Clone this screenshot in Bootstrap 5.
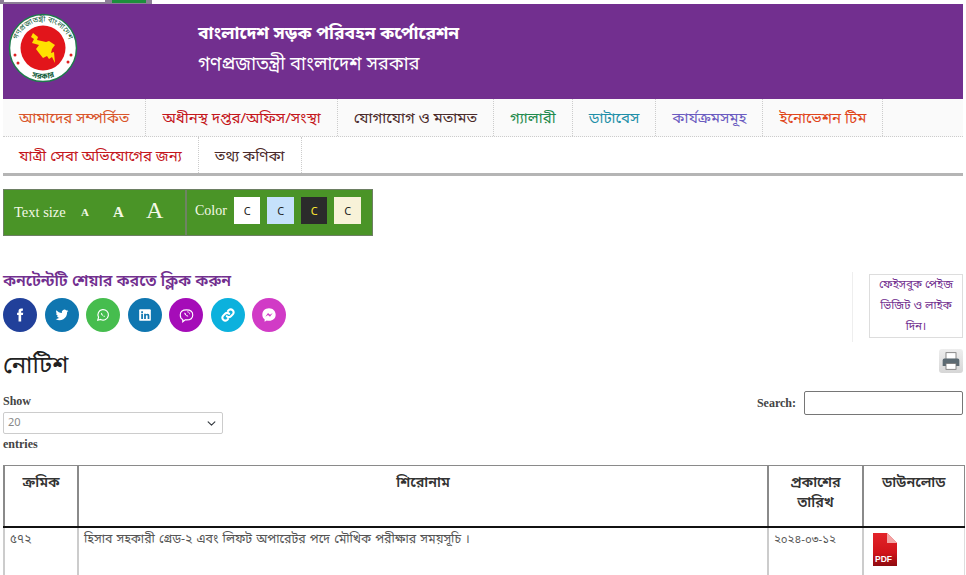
<!DOCTYPE html>
<html lang="bn">
  <head>
    <meta charset="UTF-8" />
    <meta name="viewport" content="width=device-width, initial-scale=1.0" />
    <title>নোটিশ</title>
    <link
      href="https://cdn.jsdelivr.net/npm/bootstrap@5.3.3/dist/css/bootstrap.min.css"
      rel="stylesheet"
    />
    <style>
      html { overflow: hidden; }
      body { font-family: "Noto Sans Bengali", "Liberation Serif", "Noto Sans", serif; font-size: 13px; color: #333; background: #fff; padding: 0 3px; }
      .top-strip { width: 152px; height: 4px; background: #8c7f96; gap: 7px; margin-left: -3px; padding-left: 4px; }
      .top-strip i { display: block; height: 2px; }
      .strip-input { width: 101px; background: #fff; }
      .strip-btn { width: 34px; height: 3px !important; background: #1c8f3c; }
      .banner { height: 95px; background: #722f8f; color: #fff; }
      .banner-logo { width: 195px; padding: 9px 0 0 5px; }
      .banner-title { font-size: 17.5px; font-weight: 700; line-height: 26px; margin-top: 18px; }
      .banner-sub { font-size: 18.4px; line-height: 26px; margin-top: 5px; }
      .menu-bar { border-bottom: 3px solid #b5b5b5; background: #fff; }
      .menu-row { height: 38px; border-bottom: 1px dotted #ccc; background: #fafafa; }
      .menu-row + .menu-row { background: #fff; border-bottom: 0; height: 36px; }
      .menu-row a { display: block; padding: 2px 16px 0; line-height: 36px; font-size: 15px; text-decoration: none; border-right: 1px dotted #ccc; }
      .access-panel { width: 370px; height: 47px; margin-top: 13px; background: #4a9427; border: 1px solid #6d7f63; color: #f4f9e6; }
      .access-left { width: 183px; border-right: 2px solid #6f8364; padding-left: 10px; }
      .access-left span { font-family: "Liberation Serif", serif; line-height: 1; }
      .access-right { padding: 0 0 5px 8px; font-family: "Liberation Serif", serif; font-size: 14px; gap: 7px; }
      .swatch { width: 26.5px; height: 27px; font-family: "Noto Sans", sans-serif; font-size: 11px; line-height: 27px; text-align: center; }
      .share-block { margin-top: 33px; }
      .share-title { font-size: 16px; font-weight: 600; color: #722f8f; line-height: 24px; margin: 1px 0 4px; }
      .share-row { gap: 7.5px; }
      .share-btn { width: 34px; height: 34px; border-radius: 50%; }
      .fb-side { width: 111px; height: 70px; border-left: 1px solid #eee; padding: 2px 0 0 16px; margin-top: 3px; }
      .fb-box { width: 94px; height: 64px; border: 1px solid #ddd; padding: 0 7px; color: #722f8f; font-size: 11.5px; line-height: 21px; text-align: center; }
      .page-title { font-size: 24px; font-weight: 400; color: #222; line-height: 36px; margin: 1px 0 0; }
      .print-btn { width: 24px; height: 24px; background: linear-gradient(#eee, #d6d6d6); border-radius: 3px; margin-top: 1px; }
      .len-label { font-family: "Liberation Serif", serif; font-size: 12px; line-height: 16px; font-weight: 700; color: #444; }
      .len-select { width: 220px; height: 22px; padding: 0 8px 0 4px; font-size: 11px; color: #888; border-color: #ccc; border-radius: 2px; background-size: 11px 9px; background-position: right 5px center; }
      .search-box { width: 159px; height: 24px; border: 1px solid #767676; border-radius: 2px; }
      .notice-table { margin: 13px 0 0; table-layout: fixed; width: 960px; border-collapse: collapse; }
      .notice-table th { font-size: 14.3px; font-weight: 600; line-height: 20px; text-align: center; vertical-align: top; padding: 8px 5px 11px; height: 61px; border: 1px solid #8a8a8a; border-bottom: 2px solid #111; border-left-width: 2px; color: #333; }
      .notice-table td { font-size: 12px; color: #555; padding: 2px 5px; height: 70px; border: 0; border-left: 2px solid #ccc; border-right: 1px solid #ddd; vertical-align: top; line-height: 20px; }
      .notice-table td.notice-name { font-size: 12.4px; word-spacing: 1px; }
      .notice-table td.notice-date { font-size: 11.5px; }
      .pdf-icon { margin: 3px 0 0 4px; }
      .pdf-label { font-family: "Liberation Sans", sans-serif; font-size: 8.5px; font-weight: 700; fill: #fff; }
    </style>
  </head>
  <body>
    <div class="top-strip d-flex">
      <i class="strip-input"></i>
      <i class="strip-btn"></i>
    </div>

    <header class="banner d-flex">
      <div class="banner-logo">
        <svg width="70" height="70" viewBox="0 0 70 70">
          <defs>
            <path id="ringTop" d="M11 48 A27 27 0 1 1 59 48" />
            <path id="ringBottom" d="M8 50 A31 31 0 0 0 62 50" />
          </defs>
          <circle cx="35" cy="35" r="33.500" fill="#fff" stroke="#1f7a4d" stroke-width="1.500" />
          <circle cx="35" cy="35" r="22.500" fill="#e2151b" />
          <path d="M25 20L30 24 29 27 38 29 41 28 47 32 44 36 43 40 46 39 47 50 44 44 41 46 39 43 35 45 31 40 28 36 31 32 24 30 26 26 23 24z" fill="#ffe000" />
          <circle cx="7" cy="42" r="1.500" fill="#d22" />
          <circle cx="10" cy="50" r="1.500" fill="#d22" />
          <circle cx="63" cy="42" r="1.500" fill="#d22" />
          <circle cx="60" cy="49" r="1.500" fill="#d22" />
          <text font-size="7.500" fill="#14603c" text-anchor="middle"><textPath href="#ringTop" startOffset="50%">গণপ্রজাতন্ত্রী বাংলাদেশ</textPath></text>
          <text font-size="8" font-weight="700" fill="#14603c" text-anchor="middle"><textPath href="#ringBottom" startOffset="50%">সরকার</textPath></text>
        </svg>
      </div>
      <div>
        <div class="banner-title">বাংলাদেশ সড়ক পরিবহন কর্পোরেশন</div>
        <div class="banner-sub">গণপ্রজাতন্ত্রী বাংলাদেশ সরকার</div>
      </div>
    </header>

    <nav class="menu-bar">
      <div class="menu-row d-flex">
        <a href="#" style="color: #d9552b">আমাদের সম্পর্কিত</a>
        <a href="#" style="color: #c4161c">অধীনস্থ দপ্তর/অফিস/সংস্থা</a>
        <a href="#" style="color: #4a2a2a">যোগাযোগ ও মতামত</a>
        <a href="#" style="color: #1f8a4c">গ্যালারী</a>
        <a href="#" style="color: #1f8fa8">ডাটাবেস</a>
        <a href="#" style="color: #6a5bc0">কার্যক্রমসমূহ</a>
        <a href="#" style="color: #e0461c">ইনোভেশন টিম</a>
      </div>
      <div class="menu-row d-flex">
        <a href="#" style="color: #c4161c">যাত্রী সেবা অভিযোগের জন্য</a>
        <a href="#" style="color: #4a2a2a">তথ্য কণিকা</a>
      </div>
    </nav>

    <section class="access-panel d-flex">
      <div class="access-left d-flex align-items-center">
        <span style="font-size: 14.5px; width: 67px">Text size</span>
        <span style="font-size: 11px; font-weight: 700; width: 32px">A</span>
        <span style="font-size: 15px; font-weight: 700; width: 33px">A</span>
        <span style="font-size: 24px; padding-bottom: 6px">A</span>
      </div>
      <div class="access-right d-flex align-items-center">
        <span>Color</span>
        <div class="swatch" style="background: #fff; color: #222">C</div>
        <div class="swatch" style="background: #c5e1fb; color: #222">C</div>
        <div class="swatch" style="background: #2b2b2b; color: #ffe933">C</div>
        <div class="swatch" style="background: #f8f2d8; color: #222">C</div>
      </div>
    </section>

    <section class="share-block d-flex justify-content-between">
      <div>
        <h2 class="share-title">কনটেন্টটি শেয়ার করতে ক্লিক করুন</h2>
        <div class="share-row d-flex">
          <a class="share-btn d-flex align-items-center justify-content-center" href="#" style="background: #21409a">
            <svg width="14" height="14" viewBox="0 0 24 24" fill="#fff"><path d="M14 8V6c0-1 .5-1.500 1.500-1.500H17V1h-3c-3 0-4.500 2-4.500 4.500V8H7v4h2.500v11H14V12h3l.5-4z" /></svg>
          </a>
          <a class="share-btn d-flex align-items-center justify-content-center" href="#" style="background: #0f76b0">
            <svg width="14" height="14" viewBox="0 0 24 24" fill="#fff"><path d="M23 5c-.8.4-1.700.6-2.600.7.900-.6 1.600-1.400 2-2.500-.9.500-1.800.9-2.900 1.100A4.500 4.500 0 0 0 11.800 8.500C8 8.300 4.700 6.500 2.500 3.800c-1.200 2-.6 4.700 1.400 6-.7 0-1.400-.2-2-.6 0 2.200 1.600 4.100 3.600 4.500-.7.200-1.400.2-2 .1.600 1.800 2.200 3.100 4.200 3.100A9 9 0 0 1 1 18.800 12.800 12.800 0 0 0 20.700 7.400c.9-.6 1.700-1.400 2.300-2.400z" /></svg>
          </a>
          <a class="share-btn d-flex align-items-center justify-content-center" href="#" style="background: #46bd4e">
            <svg width="14" height="14" viewBox="0 0 24 24" fill="none" stroke="#fff" stroke-width="2"><path d="M3 21l1.400-5A9 9 0 1 1 8 19.600z" /><path d="M9 8c-1 1-.5 3 1.500 5s4 2.500 5 1.500l-1.500-1.500-1 .5c-1-.5-1.500-1-2-2l.5-1z" fill="#fff" stroke="none" /></svg>
          </a>
          <a class="share-btn d-flex align-items-center justify-content-center" href="#" style="background: #0f76b0">
            <svg width="14" height="14" viewBox="0 0 24 24"><rect x="2" y="2" width="20" height="20" rx="2" fill="#fff" /><path d="M5.500 10h3v9h-3zM5.500 5.500h3v3h-3zM10.500 10h3v1.300c.6-1 1.600-1.500 2.800-1.500 2.300 0 3.200 1.500 3.200 4V19h-3v-4.700c0-1.200-.4-2-1.500-2s-1.500.8-1.500 2V19h-3z" fill="#0f76b0" /></svg>
          </a>
          <a class="share-btn d-flex align-items-center justify-content-center" href="#" style="background: #a50cb8">
            <svg width="15" height="15" viewBox="0 0 24 24" fill="none" stroke="#fff" stroke-width="1.800"><path d="M6 18.500C3 17 2 14.500 2 11c0-5 3-8 10-8s10 3 10 8-3 8-10 8h-2l-4 3z" /><path d="M9 7c-1 .8-.5 2.500 1.500 4.500S14 14 15 13l-1.500-1.500-1 .5-1.500-1.500.5-1z" fill="#fff" stroke="none" /><path d="M13 6c2.500 0 4 1.500 4 4" stroke-width="1.200" /></svg>
          </a>
          <a class="share-btn d-flex align-items-center justify-content-center" href="#" style="background: #0cb1dd">
            <svg width="14" height="14" viewBox="0 0 24 24" fill="none" stroke="#fff" stroke-width="3.500" stroke-linecap="round"><path d="M10 14a5 5 0 0 0 7 0l3.500-3.500a5 5 0 0 0-7-7L12 5" /><path d="M14 10a5 5 0 0 0-7 0l-3.500 3.500a5 5 0 0 0 7 7L12 19" /></svg>
          </a>
          <a class="share-btn d-flex align-items-center justify-content-center" href="#" style="background: #d13bc6">
            <svg width="16" height="16" viewBox="0 0 24 24"><path d="M12 2C6 2 2 6.200 2 11.500c0 3 1.300 5.400 3.400 7V22l3.200-1.800c1 .3 2.200.4 3.400.4 6 0 10-4 10-9.100S18 2 12 2z" fill="#fff" /><path d="M6.500 14.500L10.500 9l3 2.500L17.500 9l-4 5.500-3-2.500z" fill="#d13bc6" /></svg>
          </a>
        </div>
      </div>
      <aside class="fb-side">
        <div class="fb-box">ফেইসবুক পেইজ ভিজিট ও লাইক দিন।</div>
      </aside>
    </section>

    <div class="d-flex justify-content-between" style="margin-top: 6px">
      <h1 class="page-title">নোটিশ</h1>
      <a class="print-btn d-flex align-items-center justify-content-center" href="#">
        <svg width="20" height="20" viewBox="0 0 24 24"><rect x="6" y="2" width="12" height="8" fill="#fff" stroke="#777" /><path d="M2 11a2 2 0 0 1 2-2h16a2 2 0 0 1 2 2v7H18v-2H6v2H2z" fill="#5c6a72" /><rect x="6" y="15" width="12" height="7" fill="#fff" stroke="#777" /></svg>
      </a>
    </div>

    <div class="d-flex justify-content-between" style="margin-top: 6px">
      <div style="padding-top: 2px">
        <div class="len-label" style="margin-bottom: 3px">Show</div>
        <select class="form-select len-select"><option>20</option></select>
        <div class="len-label" style="margin-top: 2px">entries</div>
      </div>
      <div class="d-flex align-items-start gap-2 len-label">
        <span style="line-height: 24px">Search:</span>
        <input class="search-box" type="text" />
      </div>
    </div>

    <table class="table notice-table">
      <colgroup>
        <col style="width: 74px" />
        <col style="width: 690px" />
        <col style="width: 95px" />
        <col style="width: 101px" />
      </colgroup>
      <thead>
        <tr>
          <th>ক্রমিক</th>
          <th>শিরোনাম</th>
          <th>প্রকাশের তারিখ</th>
          <th>ডাউনলোড</th>
        </tr>
      </thead>
      <tbody>
        <tr>
          <td>৫৭২</td>
          <td class="notice-name">হিসাব সহকারী গ্রেড-২ এবং লিফট অপারেটর পদে মৌখিক পরীক্ষার সময়সূচি ।</td>
          <td class="notice-date">২০২৪-০৩-১২</td>
          <td>
            <svg class="d-block pdf-icon" width="24" height="33" viewBox="0 0 24 33">
              <defs>
                <linearGradient id="pdfFill" x1="0" y1="0" x2="0" y2="1">
                  <stop offset="0" stop-color="#e3242a" />
                  <stop offset="0.6" stop-color="#d0141a" />
                  <stop offset="1" stop-color="#8e0b10" />
                </linearGradient>
              </defs>
              <path d="M0 0h14l10 10v23H0z" fill="url(#pdfFill)" />
              <path d="M14 0l10 10h-10z" fill="#f3a5a5" />
              <text class="pdf-label" x="2" y="29">PDF</text>
            </svg>
          </td>
        </tr>
      </tbody>
    </table>

    <script src="https://cdn.jsdelivr.net/npm/bootstrap@5.3.3/dist/js/bootstrap.bundle.min.js"></script>
  </body>
</html>
